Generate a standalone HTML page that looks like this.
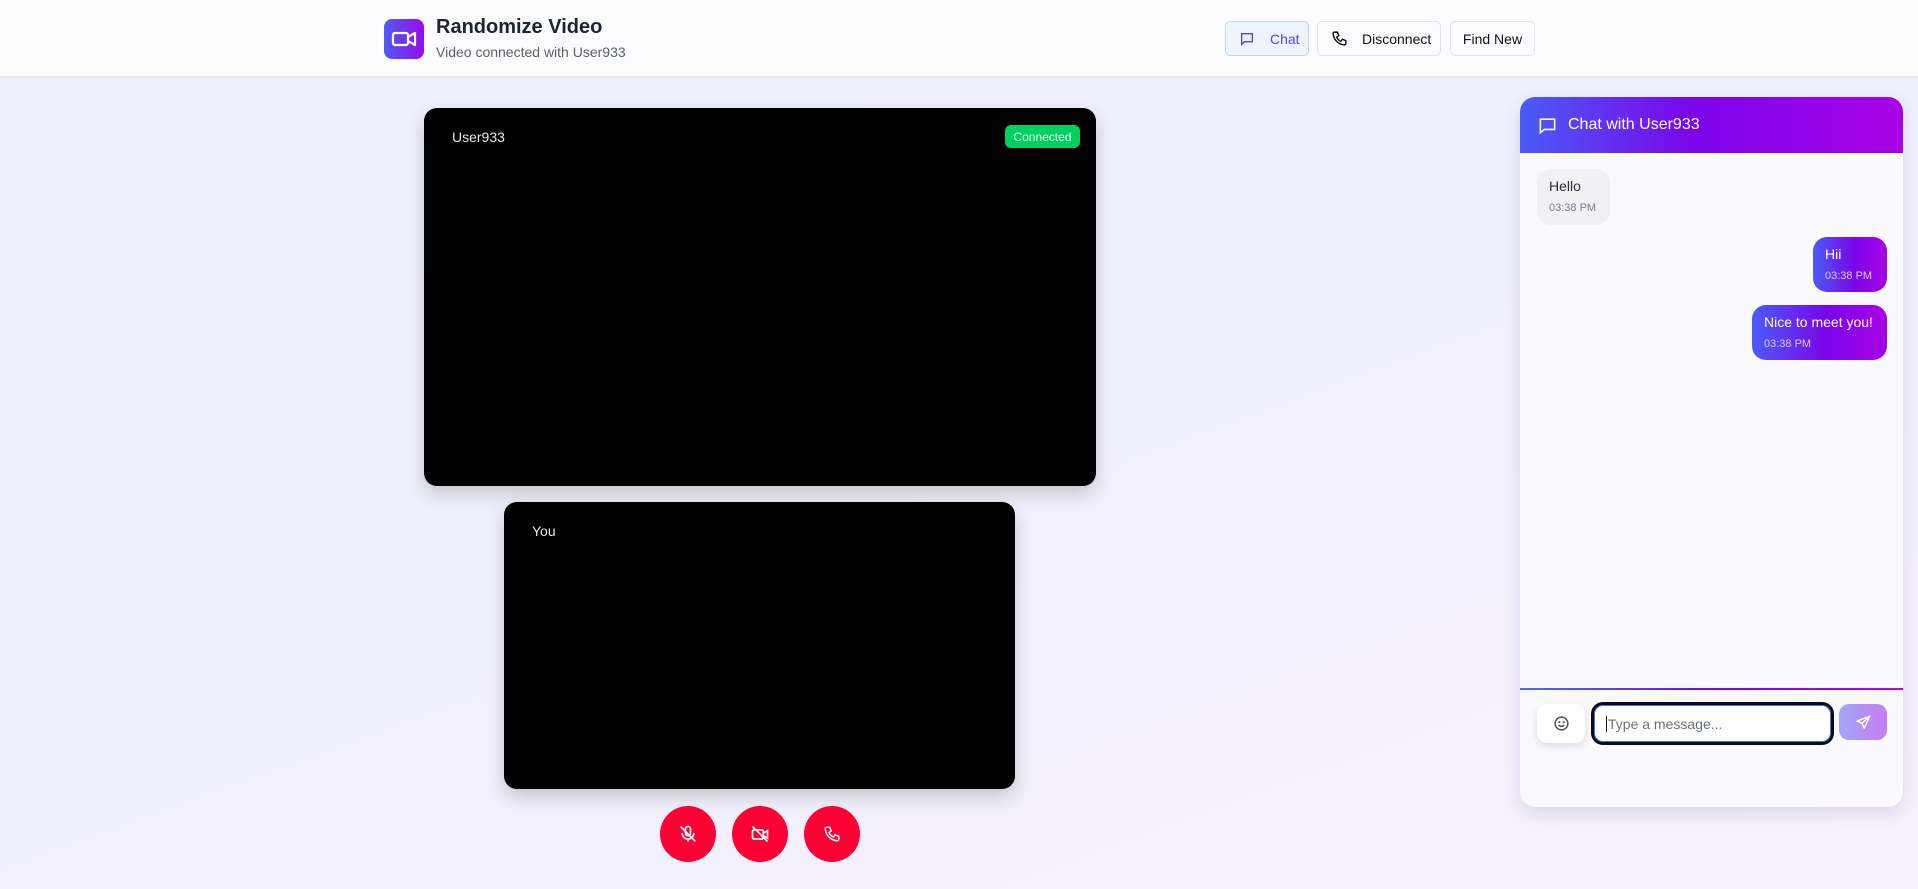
<!DOCTYPE html>
<html><head><meta charset="utf-8"><style>
*{box-sizing:border-box;margin:0;padding:0}
body{width:1918px;height:889px;overflow:hidden;font-family:"Liberation Sans","DejaVu Sans",sans-serif;background:linear-gradient(160deg,#eef0fc 0%,#f0f0fc 50%,#f6f1fc 100%);position:relative}
.hdr{position:absolute;left:0;top:0;width:1918px;height:78px;background:#fcfcfe;border-bottom:2px solid #e6e7ee}
.logo{position:absolute;left:384px;top:19px;width:40px;height:40px;border-radius:8px;background:linear-gradient(90deg,#4f5cf5,#9a0ae8)}
.t1{position:absolute;left:436px;top:16px;font-size:20px;font-weight:bold;color:#1f2433}
.t2{position:absolute;left:436px;top:44px;font-size:14px;color:#5a6070}
.btn{position:absolute;top:21px;height:35px;border:1px solid #dfe3ec;border-radius:5px;background:#fcfcfe;font-size:14px;color:#111;display:flex;align-items:center}
.vid{position:absolute;background:#000;border-radius:13px;box-shadow:0 8px 18px rgba(0,0,0,.18)}
.lbl{position:absolute;color:#e6e6e6;font-size:14px}
.rb{position:absolute;top:806px;width:56px;height:56px;border-radius:50%;background:#fe0033;display:flex;align-items:center;justify-content:center}
.panel{position:absolute;left:1520px;top:97px;width:383px;height:710px;border-radius:15px;background:#faf9fe;box-shadow:0 6px 16px rgba(60,40,120,.13);overflow:hidden}
.ph{height:56px;background:linear-gradient(90deg,#4a5cf6 0%,#7a05ea 45%,#a901e6 100%);color:#fff;font-size:16px;display:flex;align-items:center;padding-left:18px}
.msg{position:absolute;border-radius:14px;padding:9px 12px;font-size:14px}
.msg small{display:block;font-size:11px;margin-top:8px}
.out{background:linear-gradient(90deg,#4a5cf6 0%,#7a05ea 55%,#a901e6 100%);color:#fff}
.out small{color:#d8ccf8}
</style></head><body>
<div class="hdr">
 <div class="logo"><svg width="40" height="40" viewBox="0 0 40 40" fill="none" stroke="#fff" stroke-width="2.2" stroke-linejoin="round"><rect x="9" y="14" width="15" height="12" rx="2"/><path d="M24 18l7-4v12l-7-4z"/></svg></div>
 <div class="t1">Randomize Video</div>
 <div class="t2">Video connected with User933</div>
 <div class="btn" style="left:1225px;width:84px;background:#edf3ff;border-color:#bcd3fb;color:#5a3ff0"><svg style="margin:0 15px 0 13px" width="16" height="16" viewBox="0 0 24 24" fill="none" stroke="#5a3ff0" stroke-width="2"><path d="M4 4h16v12H8l-4 4z"/></svg>Chat</div>
 <div class="btn" style="left:1317px;width:124px"><svg style="margin:0 14px 0 13px" width="17" height="17" viewBox="0 0 24 24" fill="none" stroke="#111" stroke-width="2"><path d="M5 3h4l2 5-3 2a11 11 0 0 0 6 6l2-3 5 2v4a2 2 0 0 1-2 2A17 17 0 0 1 3 5a2 2 0 0 1 2-2z"/></svg>Disconnect</div>
 <div class="btn" style="left:1450px;width:85px;justify-content:center">Find New</div>
</div>
<div class="vid" style="left:424px;top:108px;width:672px;height:378px">
 <div class="lbl" style="left:28px;top:21px">User933</div>
 <div style="position:absolute;left:581px;top:17px;width:75px;height:23px;border-radius:6px;background:#00d160;color:#eafff0;font-size:12px;display:flex;align-items:center;justify-content:center">Connected</div>
</div>
<div class="vid" style="left:504px;top:502px;width:511px;height:287px">
 <div class="lbl" style="left:28px;top:21px">You</div>
</div>
<div class="rb" style="left:660px"><svg width="20" height="20" viewBox="0 0 24 24" fill="none" stroke="#fff" stroke-width="2"><rect x="9" y="3" width="6" height="11" rx="3"/><path d="M5 11a7 7 0 0 0 14 0M12 18v3M3 3l18 18"/></svg></div>
<div class="rb" style="left:732px"><svg width="20" height="20" viewBox="0 0 24 24" fill="none" stroke="#fff" stroke-width="2"><rect x="3" y="7" width="13" height="11" rx="2"/><path d="M16 11l5-3v9l-5-3M3 3l18 18"/></svg></div>
<div class="rb" style="left:804px"><svg width="18" height="18" viewBox="0 0 24 24" fill="none" stroke="#fff" stroke-width="2"><path d="M5 3h4l2 5-3 2a11 11 0 0 0 6 6l2-3 5 2v4a2 2 0 0 1-2 2A17 17 0 0 1 3 5a2 2 0 0 1 2-2z"/></svg></div>
<div class="panel">
 <div class="ph"><svg style="margin-right:11px" width="19" height="19" viewBox="0 0 24 24" fill="none" stroke="#fff" stroke-width="2"><path d="M3 4h18v13H8l-5 4z"/></svg>Chat with User933</div>
 <div class="msg" style="left:17px;top:72px;width:73px;height:56px;background:#f1f1f4;color:#2a2f3a">Hello<small style="color:#7a7f8c">03:38 PM</small></div>
 <div class="msg out" style="left:293px;top:140px;width:74px;height:55px">Hii<small>03:38 PM</small></div>
 <div class="msg out" style="left:232px;top:208px;width:135px;height:55px">Nice to meet you!<small>03:38 PM</small></div>
 <div style="position:absolute;left:0;top:591px;width:383px;height:2px;background:linear-gradient(90deg,#4a6cf6,#7a05ea,#c000e0)"></div>
 <div style="position:absolute;left:17px;top:607px;width:48px;height:39px;border-radius:10px;background:#fff;box-shadow:0 3px 8px rgba(0,0,0,.12);display:flex;align-items:center;justify-content:center"><svg width="17" height="17" viewBox="0 0 24 24" fill="none" stroke="#444b5a" stroke-width="2"><circle cx="12" cy="12" r="9"/><path d="M8 14a5 5 0 0 0 8 0"/><circle cx="9" cy="10" r=".6"/><circle cx="15" cy="10" r=".6"/></svg></div>
 <div style="position:absolute;left:71px;top:605px;width:243px;height:43px;border:3px solid #0b0b1a;border-radius:12px;background:#fff;box-shadow:inset 0 0 0 1px #4a6cf6;display:flex;align-items:center;padding-left:12px;font-size:14px;color:#6b7080"><span style="border-left:1px solid #111;padding-left:1px">Type a message...</span></div>
 <div style="position:absolute;left:319px;top:607px;width:48px;height:36px;border-radius:10px;background:linear-gradient(90deg,#a2a7f6,#c57cf2);display:flex;align-items:center;justify-content:center"><svg width="17" height="17" viewBox="0 0 24 24" fill="none" stroke="#fff" stroke-width="2" stroke-linejoin="round"><path d="M21 3L3 10l7 3 3 7z M10 13l11-10"/></svg></div>
</div>
</body></html>
